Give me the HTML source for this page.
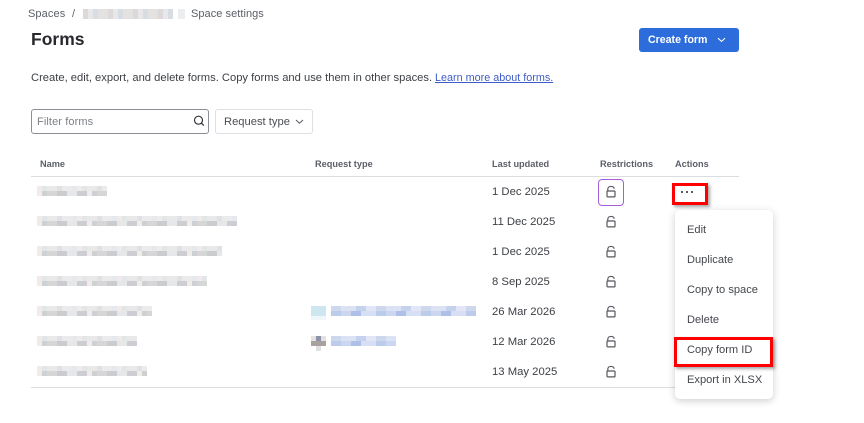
<!DOCTYPE html>
<html><head><meta charset="utf-8">
<style>
html,body{margin:0;padding:0;width:864px;height:423px;overflow:hidden;background:#fff}
body{position:relative;font-family:"Liberation Sans",sans-serif;font-size:11.5px;color:#44474d}
.t{position:absolute;white-space:nowrap;line-height:14px}
.th{font-weight:bold;font-size:9.2px;color:#5a5f68}
.d{font-size:11.3px;color:#3d4046}
.mi{font-size:11.1px;color:#44474d;left:687px}
.a{position:absolute}
.m{position:absolute;height:10px;background:
 repeating-linear-gradient(90deg,#f0ebea 0 5px,#e2e6e7 5px 10px,#e9e9e9 10px 20px,#dfe1e5 20px 25px,#ebebeb 25px 35px,#e6e8ee 35px 40px) top/100% 5px no-repeat,
 repeating-linear-gradient(90deg,#f1ecea 0 5px,#ced1d4 5px 10px,#d6d6d7 10px 20px,#cbccd0 20px 30px,#e6e7e9 30px 40px,#ccced3 40px 50px) bottom/100% 5px no-repeat}
.b{position:absolute;height:10px;background:
 repeating-linear-gradient(90deg,#cdd8ef 0 10px,#dbe2f4 10px 25px,#c4d2ee 25px 35px,#e2e6f6 35px 45px) top/100% 5px no-repeat,
 repeating-linear-gradient(90deg,#bccdeb 0 10px,#cbd6f0 10px 20px,#aebfe8 20px 30px,#d6dff3 30px 45px) bottom/100% 5px no-repeat}
svg{position:absolute;overflow:visible}
</style></head><body>
<div class="t" style="left:28px;top:7px;font-size:11px;color:#5c6068;letter-spacing:.1px">Spaces</div>
<div class="t" style="left:72px;top:7px;font-size:11px;color:#5c6068">/</div>
<div class="a" style="left:83px;top:9px;width:90px;height:10px;background:repeating-linear-gradient(90deg,#ddd9d8 0 5px,#e8e8ea 5px 10px,#d8dde4 10px 15px,#e4e2e0 15px 25px)"></div>
<div class="a" style="left:178px;top:9px;width:7px;height:10px;background:#eceef0"></div>
<div class="t" style="left:191px;top:7px;font-size:11px;color:#5c6068;letter-spacing:.05px">Space settings</div>
<div class="t" style="left:31px;top:28px;font-size:17.5px;line-height:22px;font-weight:bold;color:#292a2e">Forms</div>

<div class="a" style="left:639px;top:28px;width:100px;height:24px;background:#2d6cdb;border-radius:3px"></div>
<div class="t" style="left:648px;top:33px;font-size:10.6px;font-weight:bold;color:#fff">Create form</div>
<svg style="left:717px;top:37px" width="10" height="6" viewBox="0 0 10 6"><path d="M1 1.2 L4.5 4.4 L8 1.2" fill="none" stroke="#fff" stroke-width="1.1"/></svg>

<div class="t" style="left:31px;top:71px;font-size:11.2px;color:#3d4046">Create, edit, export, and delete forms. Copy forms and use them in other spaces.</div>
<div class="t" style="left:435px;top:71px;font-size:10.8px;color:#3f5cc7;text-decoration:underline">Learn more about forms.</div>

<div class="a" style="left:31px;top:109px;width:176px;height:23px;border:1px solid #8b8f96;border-radius:3px"></div>
<div class="t" style="left:37px;top:115px;font-size:11px;color:#7b7f87;letter-spacing:.1px">Filter forms</div>
<svg style="left:193px;top:115px" width="13" height="13" viewBox="0 0 13 13"><circle cx="5.5" cy="5.2" r="4" fill="none" stroke="#33363b" stroke-width="1.2"/><path d="M8.4 8.1 L10.8 10.6" stroke="#33363b" stroke-width="1.3"/></svg>
<div class="a" style="left:215px;top:109px;width:96px;height:23px;border:1px solid #dcdfe3;border-radius:3px"></div>
<div class="t" style="left:224px;top:115px;font-size:11.2px;color:#4a4d54">Request type</div>
<svg style="left:295px;top:119px" width="10" height="6" viewBox="0 0 10 6"><path d="M1 1 L4.5 4.2 L8 1" fill="none" stroke="#55585f" stroke-width="1"/></svg>

<div class="t th" style="left:40px;top:157px">Name</div>
<div class="t th" style="left:315px;top:157px">Request type</div>
<div class="t th" style="left:492px;top:157px">Last updated</div>
<div class="t th" style="left:600px;top:157px">Restrictions</div>
<div class="t th" style="left:675px;top:157px">Actions</div>
<div class="a" style="left:31px;top:176px;width:708px;height:1px;background:#dcdddf"></div>
<div class="a" style="left:31px;top:387px;width:708px;height:1px;background:#dcdddf"></div>

<div class="m" style="left:37px;top:186px;width:70px"></div>
<div class="m" style="left:37px;top:216px;width:200px"></div>
<div class="m" style="left:37px;top:246px;width:185px"></div>
<div class="m" style="left:37px;top:276px;width:170px"></div>
<div class="m" style="left:37px;top:306px;width:115px"></div>
<div class="m" style="left:37px;top:336px;width:100px"></div>
<div class="m" style="left:37px;top:366px;width:110px"></div>

<div class="a" style="left:311px;top:306px;width:15px;height:14px;background:linear-gradient(#cde6f0 0 10px,#f0f7fa 10px)"></div>
<div class="b" style="left:331px;top:306px;width:145px"></div>
<div class="a" style="left:311px;top:336px;width:15px;height:15px;background:linear-gradient(90deg,#e4e2e0 0 5px,#8a93a8 5px 10px,#e4e2e0 10px) top/100% 5px no-repeat,linear-gradient(#a8a19d,#a8a19d) center/100% 5px no-repeat,linear-gradient(90deg,#fff 0 5px,#e0e0e0 5px 10px,#fff 10px) bottom/100% 5px no-repeat"></div>
<div class="b" style="left:331px;top:336px;width:65px"></div>

<div class="t d" style="left:492px;top:185px">1 Dec 2025</div>
<div class="t d" style="left:492px;top:215px">11 Dec 2025</div>
<div class="t d" style="left:492px;top:245px">1 Dec 2025</div>
<div class="t d" style="left:492px;top:275px">8 Sep 2025</div>
<div class="t d" style="left:492px;top:305px">26 Mar 2026</div>
<div class="t d" style="left:492px;top:335px">12 Mar 2026</div>
<div class="t d" style="left:492px;top:365px">13 May 2025</div>

<div class="a" style="left:598px;top:179px;width:24px;height:25px;border:1px solid #a55fdc;border-radius:4px"></div>
<svg width="0" height="0"><defs><g id="l" fill="none" stroke="#55585f" stroke-width="1.2"><rect x="1" y="5" width="8" height="5.9" rx=".8"/><path d="M1.8 5 V3 C1.8 -.4 8 -.4 8.2 2.8"/></g></defs></svg>
<svg style="left:606px;top:186px" width="10" height="13"><use href="#l"/></svg>
<svg style="left:606px;top:216px" width="10" height="13"><use href="#l"/></svg>
<svg style="left:606px;top:246px" width="10" height="13"><use href="#l"/></svg>
<svg style="left:606px;top:276px" width="10" height="13"><use href="#l"/></svg>
<svg style="left:606px;top:306px" width="10" height="13"><use href="#l"/></svg>
<svg style="left:606px;top:336px" width="10" height="13"><use href="#l"/></svg>
<svg style="left:606px;top:366px" width="10" height="13"><use href="#l"/></svg>

<div class="a" style="left:672px;top:183px;width:30px;height:16px;border:3px solid #f00;box-shadow:2px 2px 3px rgba(0,0,0,.35)"></div>
<div class="a" style="left:681px;top:191px;width:2px;height:2px;background:#55585f;box-shadow:5px 0 #55585f,10px 0 #55585f"></div>

<div class="a" style="left:675px;top:210px;width:98px;height:189px;background:#fff;border-radius:5px;box-shadow:0 2px 8px rgba(30,35,45,.22)"></div>
<div class="t mi" style="top:223px">Edit</div>
<div class="t mi" style="top:253px">Duplicate</div>
<div class="t mi" style="top:283px">Copy to space</div>
<div class="t mi" style="top:313px">Delete</div>
<div class="t mi" style="top:343px">Copy form ID</div>
<div class="t mi" style="top:373px">Export in XLSX</div>
<div class="a" style="left:674px;top:337px;width:93px;height:24px;border:3px solid #f00;box-shadow:2px 2px 3px rgba(0,0,0,.35)"></div>
</body></html>
